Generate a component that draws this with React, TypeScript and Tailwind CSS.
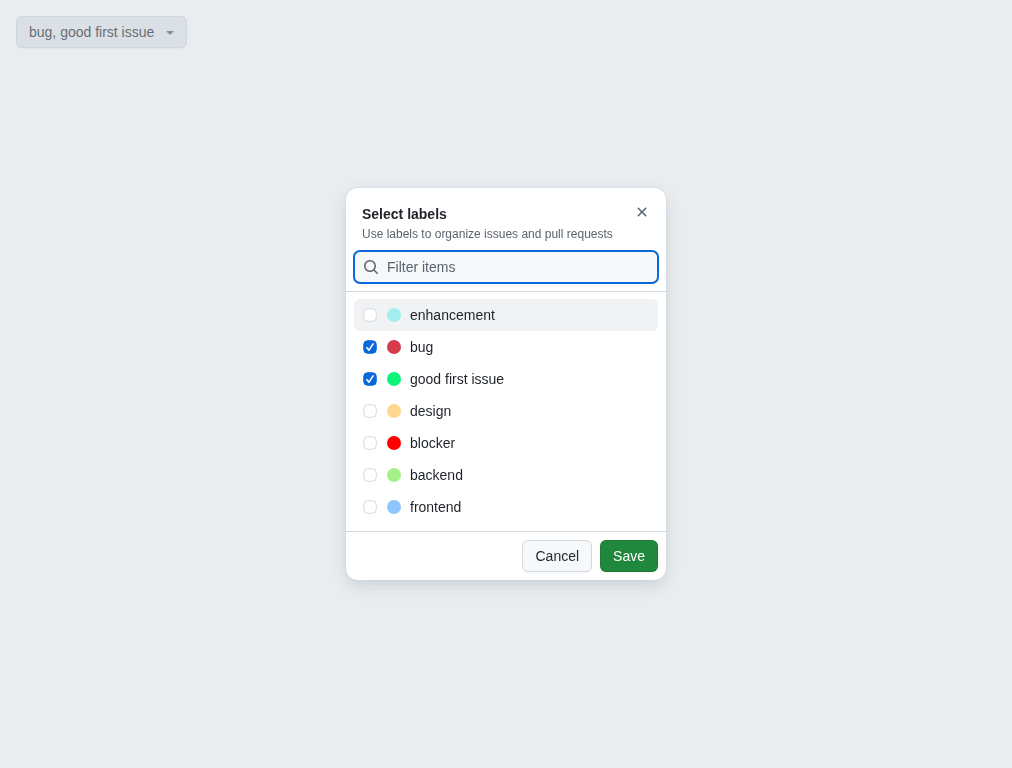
import { useState } from 'react';

type Label = { name: string; color: string };

const labels: Label[] = [
  { name: 'enhancement', color: 'bg-[#a2eeef]' },
  { name: 'bug', color: 'bg-[#d73a4a]' },
  { name: 'good first issue', color: 'bg-[#0cf478]' },
  { name: 'design', color: 'bg-[#ffd78e]' },
  { name: 'blocker', color: 'bg-[#ff0000]' },
  { name: 'backend', color: 'bg-[#a4f287]' },
  { name: 'frontend', color: 'bg-[#8dc6fc]' },
];

function CaretIcon() {
  return (
    <svg width="16" height="16" viewBox="0 0 16 16" fill="currentColor" aria-hidden="true">
      <path d="m4.427 7.427 3.396 3.396a.25.25 0 0 0 .354 0l3.396-3.396A.25.25 0 0 0 11.396 7H4.604a.25.25 0 0 0-.177.427Z" />
    </svg>
  );
}

function CloseIcon() {
  return (
    <svg width="16" height="16" viewBox="0 0 16 16" fill="currentColor" aria-hidden="true">
      <path d="M3.72 3.72a.75.75 0 0 1 1.06 0L8 6.94l3.22-3.22a.749.749 0 0 1 1.275.326.749.749 0 0 1-.215.734L9.06 8l3.22 3.22a.749.749 0 0 1-.326 1.275.749.749 0 0 1-.734-.215L8 9.06l-3.22 3.22a.751.751 0 0 1-1.042-.018.751.751 0 0 1-.018-1.042L6.94 8 3.72 4.78a.75.75 0 0 1 0-1.06Z" />
    </svg>
  );
}

function SearchIcon() {
  return (
    <svg width="16" height="16" viewBox="0 0 16 16" fill="currentColor" aria-hidden="true">
      <path d="M10.68 11.74a6 6 0 0 1-7.922-8.982 6 6 0 0 1 8.982 7.922l3.04 3.04a.749.749 0 0 1-.326 1.275.749.749 0 0 1-.734-.215ZM11.5 7a4.499 4.499 0 1 0-8.997 0A4.499 4.499 0 0 0 11.5 7Z" />
    </svg>
  );
}

function Checkbox({ checked }: { checked: boolean }) {
  return (
    <svg width="16" height="16" viewBox="0 0 16 16" fill="none" role="checkbox" aria-checked={checked}>
      <rect
        x="1.75"
        y="1.75"
        width="12.5"
        height="12.5"
        rx="3.75"
        className={checked ? 'fill-[#0969da] stroke-[#0969da]' : 'fill-white stroke-[#d1d9e0]'}
      />
      {checked && (
        <path
          d="M4.9 8.7 7 11.1 11.1 4.9"
          className="stroke-white"
          strokeWidth="1.6"
          strokeLinecap="round"
          strokeLinejoin="round"
        />
      )}
    </svg>
  );
}

export default function App() {
  const [selected, setSelected] = useState<string[]>(['bug', 'good first issue']);
  const [filter, setFilter] = useState('');

  const toggle = (name: string) =>
    setSelected((s) => (s.includes(name) ? s.filter((n) => n !== name) : [...s, name]));

  return (
    <div className="min-h-screen bg-white p-4 font-['Liberation_Sans',Arial,sans-serif] text-sm text-[#1f2328]">
      <button className="flex h-8 items-center gap-2 rounded-md border border-[#d1d9e0] bg-[#e6eaef] pr-2 pl-3 text-[#25292e] shadow-[0_1px_0_0_#1f23280a]">
        <span className="leading-5">{selected.join(', ')}</span>
        <span className="text-[#59636e]">
          <CaretIcon />
        </span>
      </button>

      <div className="fixed inset-0 flex items-center justify-center bg-[#c8d1da]/40">
        <div
          role="dialog"
          aria-label="Select labels"
          className="flex h-[392px] w-80 flex-col overflow-hidden rounded-xl bg-white shadow-[0_0_0_1px_#d1d9e080,0_6px_12px_-3px_#25292e0a,0_6px_18px_0_#25292e1f]"
        >
          <div className="flex h-[63px] shrink-0 items-start justify-between pt-2 pr-2 pl-4">
            <div className="pt-2">
              <h1 className="text-sm leading-5 font-bold">Select labels</h1>
              <h2 className="text-xs leading-5 text-[#59636e]">Use labels to organize issues and pull requests</h2>
            </div>
            <button aria-label="Close" className="flex size-8 items-center justify-center text-[#59636e]">
              <CloseIcon />
            </button>
          </div>

          <div className="shrink-0 border-b border-[#d1d9e0] px-2 pb-2">
            <div className="flex h-8 items-center gap-2 rounded-md bg-[#f6f8fa] px-[9px] text-[#59636e] outline-2 -outline-offset-1 outline-[#0969da]">
              <SearchIcon />
              <input
                value={filter}
                onChange={(e) => setFilter(e.target.value)}
                placeholder="Filter items"
                className="min-w-0 flex-1 leading-5 outline-none placeholder:text-[#59636e]"
              />
            </div>
          </div>

          <ul className="flex-1 px-2 pt-[7px]">
            {labels
              .filter((l) => l.name.includes(filter))
              .map((label, i) => (
                <li
                  key={label.name}
                  onClick={() => toggle(label.name)}
                  className={`flex h-8 items-center rounded-md px-2 ${i === 0 ? 'bg-[#f1f2f4]' : ''}`}
                >
                  <Checkbox checked={selected.includes(label.name)} />
                  <span className={`ml-[9px] size-[14px] rounded-full ${label.color}`} />
                  <span className="ml-[9px] leading-5">{label.name}</span>
                </li>
              ))}
          </ul>

          <div className="flex h-[49px] shrink-0 items-center justify-end gap-2 border-t border-[#d1d9e0] px-2">
            <button className="h-8 rounded-md border border-[#d1d9e0] bg-[#f6f8fa] px-3 leading-5 text-[#25292e] shadow-[0_1px_0_0_#1f23280a]">
              Cancel
            </button>
            <button className="h-8 rounded-md border border-[#1f2328]/15 bg-[#1f883d] px-3 leading-5 text-white shadow-[0_1px_0_0_#1f23280a]">
              Save
            </button>
          </div>
        </div>
      </div>
    </div>
  );
}
